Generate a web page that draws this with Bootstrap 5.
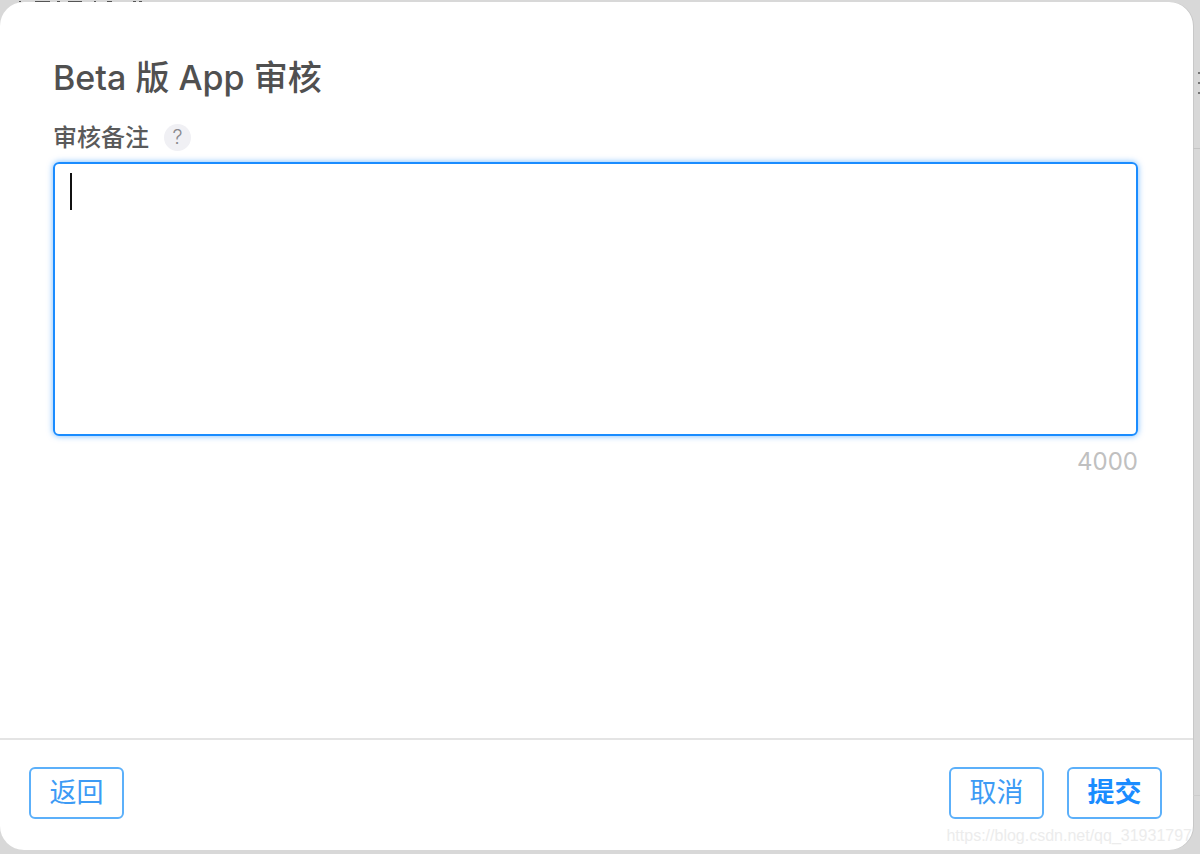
<!DOCTYPE html>
<html lang="zh">
<head>
    <meta charset="UTF-8">
    <title>Beta 版 App 审核</title>
    <link href="https://cdn.jsdelivr.net/npm/bootstrap@5.3.3/dist/css/bootstrap.min.css" rel="stylesheet">
    <style>
        html, body { height: 854px; overflow: hidden; }
        body { background: #d8d8d8; font-family: Inter, "Noto Sans CJK SC", sans-serif; color: #505050; }
        .back-strip { height: 2px; line-height: 0; overflow: hidden; }
        .page-shade { height: 852px; padding-bottom: 4px; }
        .review-dialog { width: 1193px; height: 848px; background: #fff; border-radius: 24px; box-shadow: 1px 0 0 #c8c8c8; }
        .side-gutter { flex: 1; }
        .gutter-line { height: 1px; background: #c4c4c4; }
        .gutter-dots { height: 31px; margin: 70px 0 45px; padding-left: 5px; gap: 8px; }
        .gutter-dots i { width: 2px; height: 2px; background: #777; }
        .gutter-line-low { margin-top: 646px; background: #cdcdcd; }
        .dialog-main { padding: 53px 55px 0 53px; }
        .dialog-title { font-size: 34px; font-weight: 500; line-height: 46px; margin: 0 0 21px; color: #505050; }
        .note-label { font-size: 24px; line-height: 32px; font-weight: 500; color: #5a5a5a; }
        .help-dot { width: 27px; height: 27px; border-radius: 50%; background: #f0f0f4; color: #8a8a8e; font-size: 20px; font-weight: 300; line-height: 27px; text-align: center; margin-left: 15px; margin-top: -2px; }
        .note-box { height: 274px; margin-top: 8px; border: 2px solid #1a8cff; border-radius: 6px; box-shadow: 0 0 6px rgba(26, 140, 255, .6); padding: 9px 15px; }
        .text-caret { width: 2px; height: 37px; background: #111; }
        .char-count { font-size: 24px; line-height: 32px; color: #c0c0c0; margin-top: 10px; }
        .dialog-foot { border-top: 2px solid #e4e4e4; padding: 27px 31px 0 29px; height: 112px; }
        .foot-btn { width: 95px; height: 52px; padding: 0; font-size: 27px; line-height: 48px; color: #3d9bf5; background: #fff; border: 2px solid #5cb0fa; border-radius: 6px; }
        .foot-btn-gap { gap: 23px; }
        .foot-btn-main { color: #1a8cff; font-weight: 700; }
        .mark-text { font-family: "Liberation Sans", sans-serif; font-size: 16px; line-height: 20px; color: #ececec; text-align: right; margin: 7px -30px 0 0; }
    </style>
</head>
<body>

<div class="back-strip">
    <svg width="170" height="2" fill="#555">
        <rect x="19" width="2" height="2"/><rect x="35" width="15" height="2"/><rect x="57" width="3" height="2"/>
        <rect x="68" width="14" height="2"/><rect x="94" width="2" height="2"/><rect x="107" width="5" height="2"/>
        <rect x="133" width="3" height="2"/><rect x="139" width="3" height="2"/>
    </svg>
</div>
<div class="page-shade d-flex">
    <div class="review-dialog d-flex flex-column">
        <div class="dialog-main flex-grow-1">
            <h1 class="dialog-title">Beta 版 App 审核</h1>
            <div class="d-flex align-items-center">
                <span class="note-label">审核备注</span>
                <span class="help-dot">?</span>
            </div>
            <div class="note-box">
                <div class="text-caret"></div>
            </div>
            <div class="char-count text-end">4000</div>
        </div>
        <div class="dialog-foot">
            <div class="d-flex justify-content-between">
                <button class="btn foot-btn">返回</button>
                <div class="d-flex foot-btn-gap">
                    <button class="btn foot-btn">取消</button>
                    <button class="btn foot-btn foot-btn-main">提交</button>
                </div>
            </div>
            <div class="mark-text">https://blog.csdn.net/qq_31931797</div>
        </div>
    </div>
    <div class="side-gutter">
        <div class="gutter-dots d-flex flex-column"><i></i><i></i><i></i></div>
        <div class="gutter-line"></div>
        <div class="gutter-line gutter-line-low"></div>
    </div>
</div>

<script src="https://cdn.jsdelivr.net/npm/bootstrap@5.3.3/dist/js/bootstrap.bundle.min.js"></script>
</body>
</html>
